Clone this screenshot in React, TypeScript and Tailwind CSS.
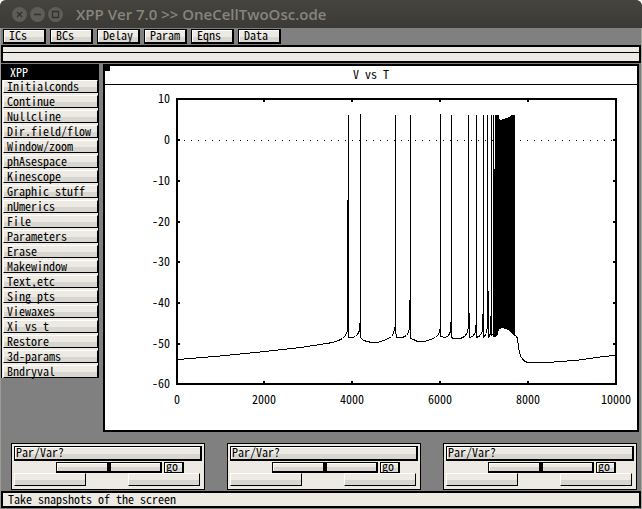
import React from "react";

const mono =
  "font-['Noto_Sans_Mono_CJK_SC','DejaVu_Sans_Mono','Liberation_Mono',monospace]";

const toolbar = ["ICs", "BCs", "Delay", "Param", "Eqns", "Data"];

const menu = [
  "Initialconds", "Continue", "Nullcline", "Dir.field/flow", "Window/zoom",
  "phAsespace", "Kinescope", "Graphic stuff", "nUmerics", "File",
  "Parameters", "Erase", "Makewindow", "Text,etc", "Sing pts",
  "Viewaxes", "Xi vs t", "Restore", "3d-params", "Bndryval",
];

const face =
  "bg-linear-to-b from-[#edeae3] from-55% to-[#d8d6d0] to-55%";

const xTicks = [
  { x: 177, label: "0" },
  { x: 264, label: "2000" },
  { x: 352, label: "4000" },
  { x: 440, label: "6000" },
  { x: 528, label: "8000" },
  { x: 616, label: "10000" },
];

const yTicks = [
  { y: 99, label: "10" },
  { y: 140, label: "0" },
  { y: 181, label: "-10" },
  { y: 222, label: "-20" },
  { y: 262, label: "-30" },
  { y: 303, label: "-40" },
  { y: 344, label: "-50" },
  { y: 384, label: "-60" },
];

const trace =
  "M177 359 L190 358 L225 355 L264 351 L300 347 L320 344 L332 342 L338 340 L342 338 L345 335 L347 330 L347 200 L348 200 V114 V337 L352 337 L355 336 L357 334 L359 330 L359 323 L360 322 V113 V337 L363 340 L367 341 L371 342 L377 342 L383 340 L388 338 L391 336 L393 333 L394 328 L395 325 V114 V330 L396 337 L402 337 L406 335 L408 332 L409 328 V300 L410 300 V114 V338 L413 339 L417 341 L424 341 L430 339 L435 337 L438 334 L440 327 V113 V336 L445 337 L448 335 L450 331 L450 322 L451 322 V114 V337 L453 338 L460 338 L464 336 L467 332 L468 325 V114 V313 L469 313 V337 L472 336 L475 332 L475 325 L476 325 V114 V337 L480 335 L482 330 L482 314 L483 314 V114 V337 L486 333 L487 325 V114 V291 L488 291 V337 L490 333 L490 316 L491 316 V114 V335 L493 333 V114 V336 L495 336";

function Chart() {
  return (
    <svg viewBox="105 85 532 345" className="block h-auto w-full" role="img" aria-label="V vs T" shapeRendering="crispEdges">
      <g fill="none" stroke="black" strokeWidth="2">
        <rect x="177" y="99" width="439" height="285" />
        {xTicks.slice(1, 5).map((t) => (
          <path key={t.x} d={`M${t.x} 99v3M${t.x} 384v-3`} />
        ))}
        {yTicks.slice(1, 7).map((t) => (
          <path key={t.y} d={`M177 ${t.y}h3M616 ${t.y}h-3`} />
        ))}
      </g>
      <path d="M177 140.5H615" stroke="black" strokeDasharray="1 6" />
      <path d={trace} transform="translate(.5 .5)" fill="none" stroke="black" />
      <path d="M495 115h4v4l1 1l3 -1l3 -1l3 -1l2 -2h4V337l-4 -5l-5 -3l-4 -1l-3 1l-1 5l-2 2h-3z" fill="black" />
      <path d="M515.5 335.5L517.500 338L518.500 347L519.500 352L520.500 356L522.500 359L524.500 361L527.500 362.500H548L560 361.500L575 360.500L590 358.500L603 356.500L616 355.500" fill="none" stroke="black" />
      <g className={`text-[12px] ${mono}`} fill="black">
        {yTicks.map((t) => (
          <text key={t.y} x="170" y={t.y + 4} textAnchor="end">{t.label}</text>
        ))}
        {xTicks.map((t) => (
          <text key={t.x} x={t.x} y="404" textAnchor="middle">{t.label}</text>
        ))}
      </g>
    </svg>
  );
}

function SliderPanel({ id }: { id: number }) {
  return (
    <section className="border border-black bg-[#edeae3] px-[2px] pt-[2px] pb-[3px]">
      <button className={`block h-[15px] w-full border border-r-2 border-b-2 border-black pb-[2px] pl-px text-left leading-[10px] shadow-[inset_1px_1px_0_white] ${face}`}>
        Par/Var?
      </button>
      <div className="mt-px flex gap-[2px] pr-[18px] pl-[42px]">
        <input
          type="range"
          aria-label={`Parameter ${id}`}
          className={`h-[11px] min-w-0 flex-1 appearance-none border border-r-2 border-b-2 border-black shadow-[inset_1px_1px_0_white] ${face} [&::-webkit-slider-thumb]:h-[8px] [&::-webkit-slider-thumb]:w-[4px] [&::-webkit-slider-thumb]:appearance-none [&::-webkit-slider-thumb]:bg-black`}
        />
        <button className={`h-[11px] w-[20px] border border-r-2 border-black pb-[4px] pl-px text-left leading-[5px] shadow-[inset_1px_1px_0_white] ${face}`}>
          go
        </button>
      </div>
      <div className="flex justify-between pr-[2px]">
        <button aria-label="Low" className={`h-[13px] w-[72px] border border-t-white border-r-black border-b-black border-l-white ${face}`} />
        <button aria-label="High" className={`h-[13px] w-[72px] border border-t-white border-r-black border-b-black border-l-white ${face}`} />
      </div>
    </section>
  );
}

function WindowButton({ label, children }: { label: string; children: React.ReactNode }) {
  return (
    <button aria-label={label} className="size-[15px] rounded-full bg-[#5f5d57]">
      <svg viewBox="0 0 15 15" className="size-[15px]" fill="none" stroke="#33322d" strokeWidth="1.300">
        {children}
      </svg>
    </button>
  );
}

export default function App() {
  return (
    <div className="bg-white">
      <div className={`overflow-hidden rounded-t-[6px] bg-[#808080] text-[12px] text-black ${mono}`}>
        <header className="flex h-[28px] items-center gap-[3px] bg-linear-to-b from-[#45443f] to-[#3b3a36] pl-[12px]">
          <WindowButton label="Close"><path d="M5 5l5 5M10 5l-5 5" /></WindowButton>
          <WindowButton label="Minimize"><path d="M4 7.500h7" /></WindowButton>
          <WindowButton label="Maximize"><path d="M4.500 4.500h6v6h-6z" /></WindowButton>
          <h1 className="ml-[10px] font-['Open_Sans','Noto_Sans',sans-serif] text-[15px] leading-[18px] font-semibold whitespace-nowrap text-[#88857c]">
            XPP Ver 7.0 &gt;&gt; OneCellTwoOsc.ode
          </h1>
        </header>
        <div className="border-x border-l-[#9c9b96] border-r-[#a8a7a2] pb-px">
          <nav className="flex h-[17px] gap-[4px] pt-px pl-[2px]">
            {toolbar.map((t) => (
              <button key={t} className={`h-[15px] w-[43px] border border-r-2 border-b-2 border-black pb-[2px] pl-[5px] text-left leading-[10px] shadow-[inset_1px_1px_0_white] ${face}`}>
                {t}
              </button>
            ))}
          </nav>
          <div className="border-2 border-black bg-[#edeae3]">
            <div className="h-[6px] border-b border-black" />
            <div className="h-[8px]" />
          </div>
          <main className="mt-px flex items-start gap-[4px] pr-[2px]">
            <aside className="w-[98px] shrink-0 border-x border-black bg-[#edeae3]">
              <h2 className="h-[16px] bg-black pl-[8px] leading-[15px] text-white">XPP</h2>
              <div className="flex flex-col gap-[2px] pl-px">
                {menu.map((m) => (
                  <button key={m} className={`h-[13px] border border-t-white border-r-black border-b-black border-l-white pb-px pl-[3px] text-left leading-[10px] whitespace-nowrap ${face}`}>
                    {m}
                  </button>
                ))}
              </div>
            </aside>
            <section className="relative min-w-0 flex-1 border-2 border-black bg-white">
              <span className="absolute top-0 left-0 size-[5px] bg-black" />
              <h2 className="h-[19px] border-b border-black text-center leading-[16px]">V vs T</h2>
              <Chart />
            </section>
          </main>
          <div className="mt-[11px] grid grid-cols-3 gap-[22px] pr-[4px] pl-[10px]">
            <SliderPanel id={1} />
            <SliderPanel id={2} />
            <SliderPanel id={3} />
          </div>
          <footer className="mt-px h-[17px] border-2 border-black bg-[#edeae3] pl-[5px] leading-[11px]">
            Take snapshots of the screen
          </footer>
        </div>
      </div>
    </div>
  );
}
